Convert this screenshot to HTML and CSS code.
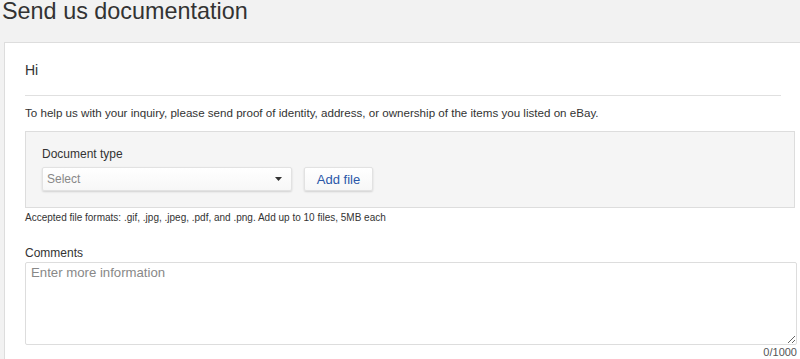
FILE: index.html
```html
<!DOCTYPE html>
<html lang="en">
<head>
    <meta charset="UTF-8">
    <title>Send us documentation</title>
    <link rel="stylesheet" href="styles.css">
</head>
<body>
    <h1 class="page-title">Send us documentation</h1>

    <div class="card">
        <p class="greeting">Hi</p>
        <hr class="divider">
        <p class="intro">To help us with your inquiry, please send proof of identity, address, or ownership of the items you listed on eBay.</p>

        <div class="upload-box">
            <label class="field-label">Document type</label>
            <div class="upload-row">
                <div class="select">
                    <span>Select</span>
                    <svg class="caret" width="7" height="4" viewBox="0 0 7 4"><path d="M0 0h7L3.5 4z" fill="#333"/></svg>
                </div>
                <button class="add-btn">Add file</button>
            </div>
        </div>
        <p class="formats">Accepted file formats: .gif, .jpg, .jpeg, .pdf, and .png. Add up to 10 files, 5MB each</p>

        <label class="comments-label">Comments</label>
        <textarea class="comments" placeholder="Enter more information"></textarea>
        <div class="counter">0/1000</div>
    </div>
</body>
</html>
```

FILE: styles.css
```css
:root {
    --text: #333;
    --border: #ddd;
    --muted: #888;
    --link: #2a57a8;
}

body {
    font-family: "Liberation Sans", Arial, sans-serif;
    margin: 0;
    background: #f2f2f2;
    color: var(--text);
    overflow: hidden;
}

.page-title {
    font-size: 23.4px;
    font-weight: normal;
    line-height: 22px;
    margin: 0 0 0 2px;
    height: 42px;
}

.card {
    background: white;
    border: 1px solid var(--border);
    margin-left: 4px;
    width: 772px;
    padding: 0 20px 0 20px;
}

.greeting {
    font-size: 14px;
    margin: 0;
    padding-top: 19px;
    line-height: 16px;
}

.divider {
    border: none;
    border-top: 1px solid #e0e0e0;
    margin: 17px 16px 0 0;
}

.intro {
    font-size: 11.6px;
    margin: 10px 0 0;
    line-height: 14px;
}

.upload-box {
    background: #f5f5f5;
    border: 1px solid var(--border);
    margin-top: 11px;
    width: 770px;
    height: 77px;
    padding: 0 0 0 16px;
    box-sizing: border-box;
}

.field-label {
    display: block;
    font-size: 12px;
    line-height: 14px;
    margin-top: 15px;
}

.upload-row {
    display: flex;
    gap: 12px;
    margin-top: 6px;
}

.select {
    width: 250px;
    height: 24px;
    box-sizing: border-box;
    background: linear-gradient(#fff, #f7f7f7);
    border: 1px solid #e2e2e2;
    border-radius: 2px;
    box-shadow: 0 1px 2px rgba(0,0,0,0.15);
    display: flex;
    align-items: center;
    justify-content: space-between;
    padding: 0 9px 0 4px;
    font-size: 12px;
    color: var(--muted);
}

.add-btn {
    width: 69px;
    height: 24px;
    background: linear-gradient(#fff, #f7f7f7);
    border: 1px solid #e2e2e2;
    border-radius: 2px;
    box-shadow: 0 1px 2px rgba(0,0,0,0.15);
    font-family: inherit;
    font-size: 13px;
    color: var(--link);
    padding: 0;
}

.formats {
    font-size: 10px;
    line-height: 12px;
    margin: 4px 0 0;
}

.comments-label {
    display: block;
    font-size: 12px;
    line-height: 14px;
    margin-top: 22px;
}

.comments {
    display: block;
    width: 772px;
    height: 83px;
    box-sizing: border-box;
    margin-top: 2px;
    border: 1px solid var(--border);
    border-radius: 2px;
    padding: 2px 5px;
    font-family: inherit;
    font-size: 13.2px;
    color: var(--text);
    resize: vertical;
}

.comments::placeholder {
    color: var(--muted);
}

.counter {
    width: 772px;
    text-align: right;
    font-size: 11px;
    color: #555;
    margin-top: 1px;
    padding-bottom: 4px;
}
```
